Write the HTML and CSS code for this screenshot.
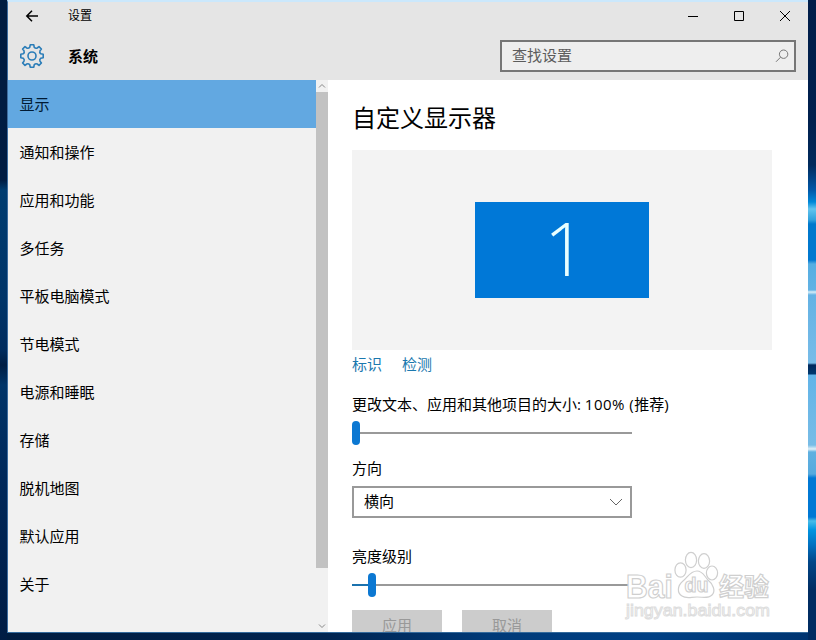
FILE: index.html
```html
<!DOCTYPE html>
<html lang="zh-CN">
<head>
<meta charset="UTF-8">
<meta name="viewport" content="width=device-width, initial-scale=1.0">
<title>设置</title>
<link rel="stylesheet" href="styles.css">
</head>
<body>
<div class="window">
  <header class="header">
    <div class="titlebar">
      <svg class="back" width="16" height="16" viewBox="0 0 16 16"><path d="M14 8H3M8 2.8L2.8 8L8 13.2"/></svg>
      <span class="title">设置</span>
      <div class="controls">
        <svg width="46" height="28" viewBox="0 0 46 28"><path d="M18 14.5h10"/></svg>
        <svg width="46" height="28" viewBox="0 0 46 28"><path d="M18.5 9.5h9v9h-9z"/></svg>
        <svg width="46" height="28" viewBox="0 0 46 28"><path d="M18 9l10 10M28 9l-10 10"/></svg>
      </div>
    </div>
    <div class="toolbar">
      <svg class="gear" width="24" height="24" viewBox="0 0 24 24">
        <path d="M10.2 .8H13.8L14.2 3.2Q15.6 4.8 17.2 4L19 2.6L21.4 5L20 6.8Q19.2 8.4 20.8 9.8L23.2 10.2V13.8L20.8 14.2Q19.2 15.6 20 17.2L21.4 19L19 21.4L17.2 20Q15.6 19.2 14.2 20.8L13.8 23.2H10.2L9.8 20.8Q8.4 19.2 6.8 20L5 21.4L2.6 19L4 17.2Q4.8 15.6 3.2 14.2L.8 13.8V10.2L3.2 9.8Q4.8 8.4 4 6.8L2.6 5L5 2.6L6.8 4Q8.4 4.8 9.8 3.2Z"/>
        <circle cx="12" cy="12" r="4"/>
      </svg>
      <h1>系统</h1>
      <div class="search">
        <span>查找设置</span>
        <svg width="14" height="14" viewBox="0 0 14 14"><circle cx="8.6" cy="5.2" r="4.2"/><path d="M5.6 8.2L1 12.8"/></svg>
      </div>
    </div>
  </header>
  <div class="body">
    <nav class="sidebar">
      <a class="item active">显示</a>
      <a class="item">通知和操作</a>
      <a class="item">应用和功能</a>
      <a class="item">多任务</a>
      <a class="item">平板电脑模式</a>
      <a class="item">节电模式</a>
      <a class="item">电源和睡眠</a>
      <a class="item">存储</a>
      <a class="item">脱机地图</a>
      <a class="item">默认应用</a>
      <a class="item">关于</a>
    </nav>
    <div class="scrollbar">
      <svg width="12" height="12" viewBox="0 0 12 12"><path d="M3 7.5l3-3l3 3"/></svg>
      <div class="thumb"></div>
      <svg width="12" height="12" viewBox="0 0 12 12"><path d="M3 4.5l3 3l3-3"/></svg>
    </div>
    <main class="content">
      <h2>自定义显示器</h2>
      <div class="preview">
        <div class="monitor">1</div>
      </div>
      <div class="links">
        <a>标识</a>
        <a>检测</a>
      </div>
      <div class="label">更改文本、应用和其他项目的大小: <span class="percent">100% (</span>推荐)</div>
      <div class="slider"><i class="knob"></i><i class="track"></i></div>
      <div class="label direction">方向</div>
      <div class="select">
        <span>横向</span>
        <svg width="14" height="8" viewBox="0 0 14 8"><path d="M1 1l6 6l6-6"/></svg>
      </div>
      <div class="label brightness">亮度级别</div>
      <div class="slider"><i class="fill"></i><i class="knob"></i><i class="track"></i></div>
      <div class="buttons">
        <button disabled>应用</button>
        <button disabled>取消</button>
      </div>
    </main>
  </div>
</div>
<!-- 水印 -->
<svg class="watermark" width="152" height="76" viewBox="0 0 152 76">
  <g class="outline">
    <text class="brand" x="2" y="49" textLength="47" lengthAdjust="spacingAndGlyphs">Bai</text>
    <ellipse cx="56.5" cy="21" rx="5.6" ry="7.2"/>
    <ellipse cx="67" cy="11" rx="5.6" ry="7.6"/>
    <ellipse cx="80" cy="12" rx="5.6" ry="7.4"/>
    <ellipse cx="88" cy="24" rx="5.6" ry="7"/>
    <path d="M73 22C66 22 64 28 59 32C53 37 53 44 58 47C62 50 67 48 73 48C79 48 84 50 88 46C92 42 89 35 84 31C80 27 79 22 73 22Z"/>
    <text class="du" x="60.5" y="43" textLength="24" lengthAdjust="spacingAndGlyphs">du</text>
    <text class="exp" x="95" y="47" textLength="50" lengthAdjust="spacingAndGlyphs">经验</text>
    <text class="url" x="2" y="67" textLength="144" lengthAdjust="spacingAndGlyphs">jingyan.baidu.com</text>
  </g>
</svg>
</body>
</html>
```
FILE: styles.css
```css
* {
  box-sizing: border-box;
}
body {
  margin: 0;
  width: 816px;
  height: 640px;
  overflow: hidden;
  padding: 0 8px 7px 7px;
  font-family: "Open Sans", "Noto Sans CJK SC", sans-serif;
  font-size: 15px;
  line-height: 20px;
  color: #000;
  /* 桌面背景：左侧、右侧、底部 */
  background:
    linear-gradient(#001d49 0, #00204e 120px, #002a5c 165px, #0058a8 190px, #0088d8 202px, #62c4ee 209px, #30a0dc 220px, #0078cc 224px, #0078d0 260px, #55aee2 264px, #62b2e4 290px, #d8eef8 292px, #64b2e4 295px, #78bce8 363px, #00285c 365px, #00386e 374px, #62b4e8 375px, #78bce6 445px, #e0f0f8 449px, #60b0e0 452px, #56aade 474px, #0078d4 478px, #0078d4 517px, #48bce8 521px, #0094e0 530px, #0070c0 545px, #004688 562px, #002c62 590px, #002c62 100%) right / 8px 100% no-repeat,
    linear-gradient(#001c40 0, #001c42 180px, #003c70 190px, #003468 300px, #002c5e 350px, #001e44 365px, #003468 385px, #00285a 480px, #001c44 100%) left / 7px 100% no-repeat,
    linear-gradient(90deg, #001c40, #002450 40%, #003a78 60%, #004084 80%, #003470);
}
.window {
  height: 633px;
  display: flex;
  flex-direction: column;
  border-left: 1px solid #3d6c9e;
  border-bottom: 1px solid #336a9c;
  border-top: 2px solid #cbe8fc;
  background: #fff;
}
.header {
  height: 78px;
  flex: none;
  background: #e5e5e5;
}
.titlebar {
  display: flex;
  align-items: center;
  height: 28px;
  padding-left: 16px;
}
svg {
  flex: none;
  fill: none;
  stroke: #000;
}
.back {
  stroke-width: 1.5;
}
.title {
  margin-left: 28px;
  font-size: 12px;
}
.controls {
  display: flex;
  margin-left: auto;
}
.toolbar {
  display: flex;
  align-items: center;
  height: 52px;
  padding: 0 12px;
}
.gear {
  stroke: #2b7db8;
  stroke-width: 1.6;
  stroke-linejoin: round;
}
h1 {
  margin: 0 0 0 24px;
  font-size: 15px;
  font-weight: bold;
}
.search {
  display: flex;
  align-items: center;
  justify-content: space-between;
  width: 296px;
  height: 32px;
  margin-left: auto;
  padding: 0 5px 0 10px;
  border: 2px solid #767676;
  background: #eee;
  color: #5c5c5c;
}
.search span,
.select span {
  padding-bottom: 2px;
}
.search svg {
  stroke: #777;
}
.body {
  display: flex;
  flex: 1;
  min-height: 0;
}
.sidebar {
  width: 308px;
  background: #f1f1f1;
}
.item {
  display: flex;
  align-items: center;
  height: 48px;
  padding-left: 11.5px;
}
.item.active {
  background: #62a8e1;
  color: #001a33;
}
.scrollbar {
  display: flex;
  flex-direction: column;
  width: 12px;
  background: #f1f1f1;
}
.scrollbar svg {
  stroke: #888;
}
.scrollbar svg:last-child {
  margin-top: auto;
}
.thumb {
  height: 476px;
  background: #c2c2c2;
}
.content {
  flex: 1;
  padding: 20px 36px 0 24px;
  overflow: hidden;
}
h2 {
  margin: 0 0 14px;
  font-size: 24px;
  font-weight: normal;
  line-height: 36px;
}
.preview {
  display: flex;
  justify-content: center;
  align-items: center;
  height: 200px;
  background: #f3f3f3;
}
.monitor {
  width: 174px;
  height: 96px;
  padding-left: 6px;
  background: #0078d7;
  color: #e8ffff;
  font-size: 74px;
  font-weight: 300;
  line-height: 92px;
  text-align: center;
}
.links {
  display: flex;
  gap: 20px;
  margin: 4px 0 20px;
  color: #1a78ae;
}
.label {
  white-space: nowrap;
}
.percent {
  letter-spacing: 0.5px;
}
.slider {
  display: flex;
  align-items: center;
  width: 280px;
  height: 24px;
  margin-top: 7px;
}
.knob {
  width: 8px;
  height: 24px;
  border-radius: 4px;
  background: #0c78d2;
}
.track {
  flex: 1;
  height: 2px;
  background: #999;
}
.fill {
  width: 16px;
  height: 2px;
  background: #1b72ae;
}
.direction {
  margin-top: 13px;
}
.select {
  display: flex;
  align-items: center;
  justify-content: space-between;
  width: 280px;
  height: 32px;
  margin-top: 8px;
  padding: 0 7px 0 10px;
  border: 2px solid #999;
}
.select svg {
  stroke: #666;
}
.brightness {
  margin-top: 28px;
}
.buttons {
  display: flex;
  gap: 20px;
  margin-top: 13px;
}
button {
  width: 90px;
  height: 32px;
  padding: 0 0 2px;
  border: none;
  background: #ccc;
  color: #999;
  font: inherit;
}
.watermark {
  position: absolute;
  left: 624px;
  top: 549px;
}
.outline {
  fill: #fff;
  stroke: #cfcfcf;
  stroke-width: 1.2;
}
.outline text {
  font-family: "Liberation Sans", "Noto Sans CJK SC", sans-serif;
  font-weight: bold;
}
.outline .brand {
  font-size: 33px;
}
.outline .du {
  font-size: 21px;
}
.outline .exp {
  font-size: 25px;
}
.outline .url {
  font-size: 17px;
  font-weight: normal;
  stroke: #ddd;
  stroke-width: 1;
}
```
